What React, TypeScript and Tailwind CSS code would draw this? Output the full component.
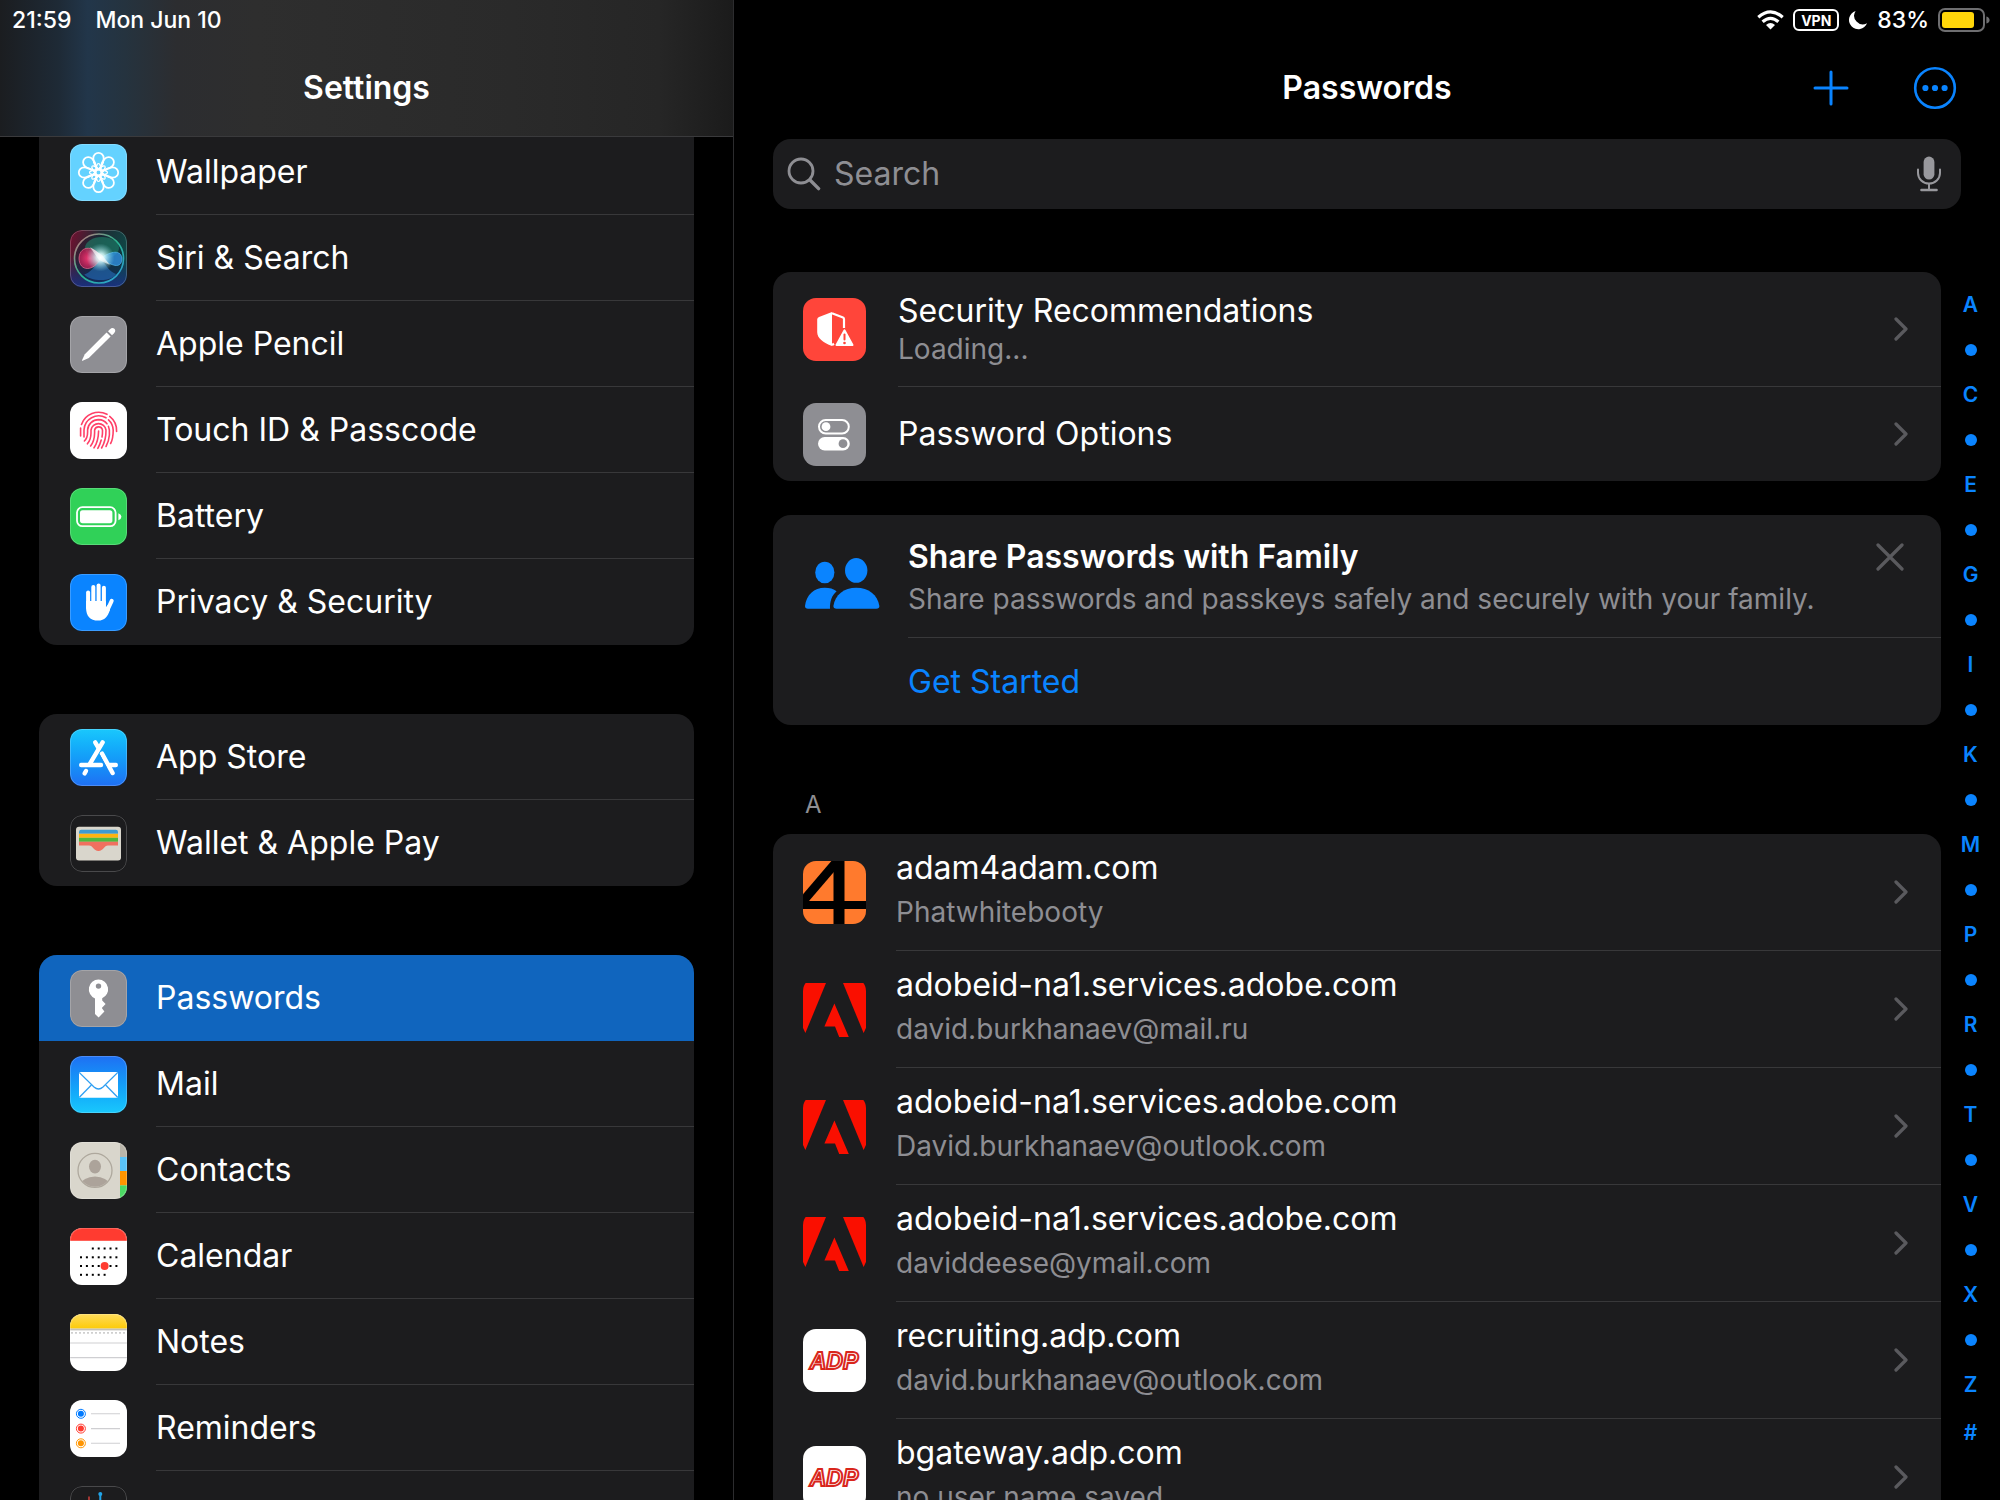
import type { ReactNode } from 'react'

// ── App icons (57 × 57) ──────────────────────────────────

function WallpaperIcon() {
  return (
    <svg viewBox="0 0 57 57" className="size-full bg-[#64d2ff]">
      <g fill="none" stroke="#fff" strokeWidth="1.8" strokeLinejoin="round">
        {[0, 45, 90, 135, 180, 225, 270, 315].map((a) => (
          <path
            key={a}
            transform={`translate(28.5 28.5) rotate(${a})`}
            d="M0 -3 L-2.6 -6 C-4.6 -9 -5.2 -11 -5.2 -14.3 A5.2 5.4 0 0 1 5.2 -14.3 C5.2 -11 4.6 -9 2.6 -6 Z"
          />
        ))}
        {[0, 45, 90, 135].map((a) => (
          <ellipse key={a} cx="28.5" cy="28.5" rx="2.6" ry="9" transform={`rotate(${a} 28.5 28.5)`} strokeWidth="1.2" />
        ))}
      </g>
    </svg>
  )
}

function SiriIcon() {
  return (
    <svg viewBox="0 0 57 57" className="size-full">
      <defs>
        <linearGradient id="siri-bg" x1="0" y1="0.2" x2="1" y2="0.5">
          <stop offset="0" stopColor="#6d1230" />
          <stop offset="0.45" stopColor="#1f2a33" />
          <stop offset="1" stopColor="#0d4a48" />
        </linearGradient>
        <linearGradient id="siri-low" x1="0" y1="0" x2="0" y2="1">
          <stop offset="0.45" stopColor="#14306b" stopOpacity="0" />
          <stop offset="1" stopColor="#1b2f86" stopOpacity="0.9" />
        </linearGradient>
        <linearGradient id="siri-ring" x1="0" y1="0" x2="1" y2="1">
          <stop offset="0" stopColor="#d0707c" />
          <stop offset="0.5" stopColor="#2bb58e" />
          <stop offset="1" stopColor="#2d9be0" />
        </linearGradient>
        <radialGradient id="siri-pink">
          <stop offset="0" stopColor="#ff3d78" />
          <stop offset="1" stopColor="#c81e58" stopOpacity="0.7" />
        </radialGradient>
        <radialGradient id="siri-glow">
          <stop offset="0" stopColor="#fff" />
          <stop offset="0.3" stopColor="#dff" stopOpacity="0.85" />
          <stop offset="1" stopColor="#7fd8e0" stopOpacity="0" />
        </radialGradient>
      </defs>
      <rect width="57" height="57" fill="url(#siri-bg)" />
      <rect width="57" height="57" fill="url(#siri-low)" />
      <circle cx="29" cy="28.5" r="24.5" fill="#0c1f33" fillOpacity="0.35" stroke="url(#siri-ring)" strokeWidth="1.6" />
      <ellipse cx="32" cy="18" rx="17" ry="11" fill="#23a27c" fillOpacity="0.45" />
      <path d="M31 28 C26 16 10 14 9 28 C9 42 24 42 31 28Z" fill="url(#siri-pink)" stroke="#ff7da0" strokeWidth="0.6" />
      <path d="M31 28 C38 23 50 18 52 28 C52 38 44 38 31 28Z" fill="#2f8fe0" fillOpacity="0.8" stroke="#5cc6ff" strokeWidth="0.6" />
      <path d="M31 28 C27 36 16 46 14 44 C20 52 42 52 46 44 C40 42 36 36 31 28Z" fill="#2774c4" fillOpacity="0.55" />
      <circle cx="30.5" cy="27.5" r="14" fill="url(#siri-glow)" />
      <path d="M20 17 L32 25 L40 35 L29 30Z" fill="#fff" fillOpacity="0.6" />
    </svg>
  )
}

function PencilIcon() {
  return (
    <svg viewBox="0 0 57 57" className="size-full bg-[#8e8e93]">
      <path d="M36.6 16.6 L40.6 20.6 L18.8 42 L12.6 44.8 Q11.8 45 12 44.2 L14.8 38.2 Z" fill="#fff" />
      <path d="M38 15.3 L40 13.2 Q42.4 10.8 44.4 12.8 Q46.3 14.8 44 17.2 L42 19.2 Z" fill="#fff" />
    </svg>
  )
}

function TouchIdIcon() {
  return (
    <svg viewBox="0 0 57 57" className="size-full bg-white">
      <g fill="none" stroke="#ff4068" strokeWidth="1.6" strokeLinecap="round">
        <path d="M11.5 22.5 A18.2 18.2 0 0 1 37 12.3" />
        <path d="M39.7 14.4 A18.2 18.2 0 0 1 46.6 29.5" />
        <path d="M10.6 26 V34" />
        <path d="M14 35 V28 A14.7 14.7 0 0 1 36 15.8" />
        <path d="M38.5 17.8 A14.7 14.7 0 0 1 43.2 28 Q43.2 37 40.6 41.5" />
        <path d="M14.4 39 Q17.6 36 17.6 30 V28 A11 11 0 0 1 28.5 17.6 Q34 17.8 37 21.8" />
        <path d="M38.4 24.3 Q40 28 39.4 33 Q38.8 39.5 36 44.5" />
        <path d="M17.4 41.8 Q21 37.5 21 31 V28 A7.6 7.6 0 0 1 36 28 Q36.2 38 31.6 46" />
        <path d="M20.6 44 Q24.5 39 24.6 31 V28.2 A4 4 0 0 1 32.5 28.4 Q32.6 32 32 35" />
        <path d="M24 45.8 Q28.4 39.5 28.6 29" />
        <path d="M31.2 38 Q30 42.5 27.8 46.4" />
      </g>
    </svg>
  )
}

function BatteryIcon() {
  return (
    <svg viewBox="0 0 57 57" className="size-full bg-[#30d158]">
      <rect x="7" y="19.2" width="38.6" height="19" rx="5.4" fill="none" stroke="#fff" strokeWidth="1.8" />
      <rect x="10" y="22.2" width="32.4" height="13" rx="2.6" fill="#fff" />
      <path d="M48.4 25.2 Q51.4 26.4 51.4 28.7 Q51.4 31 48.4 32.2 Z" fill="#fff" />
    </svg>
  )
}

function HandIcon() {
  return (
    <svg viewBox="0 0 57 57" className="size-full bg-[#0a84ff]">
      <g fill="none" stroke="#fff" strokeWidth="4" strokeLinecap="round">
        <path d="M18.1 18.4 V34" />
        <path d="M23.3 13 V30" />
        <path d="M28.6 11.6 V30" />
        <path d="M33.9 13.8 V32" />
        <path d="M41.7 26.8 L37 37" />
      </g>
      <path d="M16.1 27 H35.9 V33.2 L38.5 30 L40 36 C37.6 42.5 34.8 46.6 28.2 46.6 C20 46.6 16.1 42 16.1 34 Z" fill="#fff" />
    </svg>
  )
}

function AppStoreIcon() {
  return (
    <svg viewBox="0 0 57 57" className="size-full bg-linear-to-b from-[#1ac8fc] to-[#1f6ff3]">
      <g fill="none" stroke="#fff" strokeWidth="4.4" strokeLinecap="round">
        <path d="M25.2 13.4 L28.6 19" />
        <path d="M32.6 13.4 L20 34.6" />
        <path d="M11.2 36 H31" />
        <path d="M40 36 H45.8" />
        <path d="M32 24.6 L42.6 44" />
        <path d="M16 42 L14.6 44.4" />
      </g>
      <path d="M29.6 26 L36 38" fill="none" stroke="#1f90f6" strokeWidth="1" />
    </svg>
  )
}

function WalletIcon() {
  return (
    <svg viewBox="0 0 57 57" className="size-full bg-[#1c1c1e]">
      <rect x="6" y="11.8" width="45" height="33.6" rx="3" fill="#d9d6cc" />
      <path d="M9 18.8 V17 Q9 14.8 11.2 14.8 H45.8 Q48 14.8 48 17 V18.8 Z" fill="#3d9bd1" />
      <rect x="9" y="18.8" width="39" height="4" fill="#ffb30f" />
      <rect x="9" y="22.8" width="39" height="4" fill="#4fb83d" />
      <path d="M9 26.8 H48 V30.6 H38 C34 30.6 33.5 36 28.5 36 C23.5 36 23 30.6 19 30.6 H9 Z" fill="#f0705f" />
    </svg>
  )
}

function KeyIcon() {
  return (
    <svg viewBox="0 0 57 57" className="size-full bg-[#8e8e93]">
      <path
        fillRule="evenodd"
        fill="#fff"
        d="M28.5 9.5 A9.8 9.8 0 0 1 32.2 28.3 V30.6 L35.6 34 L31.8 38 L34.4 41.4 L28.6 47.4 L25 44 V28.4 A9.8 9.8 0 0 1 28.5 9.5 Z M28.5 13.4 A2.7 2.7 0 1 0 28.5 18.8 A2.7 2.7 0 1 0 28.5 13.4 Z"
      />
    </svg>
  )
}

function MailIcon() {
  return (
    <svg viewBox="0 0 57 57" className="size-full bg-linear-to-b from-[#1f6ff3] to-[#1ac8fc]">
      <rect x="9" y="16" width="39" height="25.8" rx="1.6" fill="#fff" />
      <g fill="none" stroke="#2f9ff2" strokeWidth="1.3">
        <path d="M9.4 16.6 L24 31 Q28.5 35 33 31 L47.6 16.6" />
        <path d="M9.4 41.2 L21.4 29" />
        <path d="M47.6 41.2 L35.6 29" />
      </g>
    </svg>
  )
}

function ContactsIcon() {
  return (
    <svg viewBox="0 0 57 57" className="size-full bg-[#d9d6cc]">
      <defs>
        <clipPath id="contact-face">
          <circle cx="25" cy="28.4" r="16.4" />
        </clipPath>
      </defs>
      <rect x="50" width="7" height="15" fill="#b9b5aa" />
      <rect x="50" y="15" width="7" height="14" fill="#5ac4fa" />
      <rect x="50" y="29" width="7" height="14.4" fill="#ff9500" />
      <rect x="50" y="43.4" width="7" height="14" fill="#4cd964" />
      <circle cx="25" cy="28.4" r="17" fill="none" stroke="#aea89d" strokeWidth="1.3" />
      <g fill="#aca39a" clipPath="url(#contact-face)">
        <ellipse cx="25" cy="24.6" rx="6" ry="6.8" />
        <ellipse cx="25" cy="43" rx="14" ry="8.6" />
      </g>
    </svg>
  )
}

function CalendarIcon() {
  const rows = [
    { y: 20.5, from: 2, to: 6 },
    { y: 29.3, from: 0, to: 6 },
    { y: 38, from: 0, to: 6 },
    { y: 46.8, from: 0, to: 4 },
  ]
  return (
    <svg viewBox="0 0 57 57" className="size-full bg-white">
      <rect width="57" height="12.8" fill="#ff3b30" />
      {rows.map((row) =>
        [0, 1, 2, 3, 4, 5, 6]
          .filter((i) => i >= row.from && i <= row.to)
          .map((i) => <rect key={`${row.y}-${i}`} x={10 + i * 5.9} y={row.y - 1} width="2" height="2" />),
      )}
      <circle cx="34.6" cy="38" r="4" fill="#ff3b30" />
    </svg>
  )
}

function NotesIcon() {
  return (
    <svg viewBox="0 0 57 57" className="size-full bg-white">
      <defs>
        <linearGradient id="notes-top" x1="0" y1="0" x2="0" y2="1">
          <stop offset="0" stopColor="#fedb5c" />
          <stop offset="1" stopColor="#fdcb08" />
        </linearGradient>
      </defs>
      <rect width="57" height="14.6" fill="url(#notes-top)" />
      <rect y="14.6" width="57" height="1.8" fill="#c3c0b8" />
      <path d="M1 18.8 H57" stroke="#cfcfcf" strokeWidth="1.8" strokeDasharray="2 2" />
      <path d="M0 29 H57 M0 43.6 H57" stroke="#cfcfd2" strokeWidth="1.2" />
    </svg>
  )
}

function RemindersIcon() {
  const items = [
    { y: 13.8, color: '#007aff' },
    { y: 28.6, color: '#ff3b30' },
    { y: 43.3, color: '#ff9500' },
  ]
  return (
    <svg viewBox="0 0 57 57" className="size-full bg-white">
      {items.map((item) => (
        <g key={item.y}>
          <circle cx="10.9" cy={item.y} r="4.5" fill="none" stroke={item.color} strokeWidth="1" />
          <circle cx="10.9" cy={item.y} r="3" fill={item.color} />
          <path d={`M21 ${item.y} H50`} stroke="#cfcfd2" strokeWidth="1.1" />
        </g>
      ))}
    </svg>
  )
}

function VoiceMemosIcon() {
  return (
    <svg viewBox="0 0 57 57" className="size-full bg-[#1c1c1e]">
      <path d="M19 10.5 V46 M22.6 14 V42" stroke="#d8413c" strokeWidth="1.4" />
      <path d="M30.3 8 V50" stroke="#21a4e8" strokeWidth="2" />
      <circle cx="30.3" cy="8" r="2" fill="#21a4e8" />
    </svg>
  )
}

// ── Site icons (63 × 63) ─────────────────────────────────

function SecurityIcon() {
  return (
    <svg viewBox="0 0 63 63" className="size-full bg-[#ff453a]">
      <path d="M29 14 L16 19 Q14.2 19.8 14.2 21.6 V34 C14.2 40.5 20 44.4 29 48 Z" fill="#fff" />
      <path d="M29 15.2 L40 19.6 Q41 20 41 21.2 V30" fill="none" stroke="#fff" strokeWidth="2.2" />
      <path d="M29 47 L31 45.8" stroke="#fff" strokeWidth="2.2" />
      <path d="M41.5 32.4 L49.4 47 H33.6 Z" fill="#fff" stroke="#fff" strokeWidth="2.2" strokeLinejoin="round" />
      <path d="M41.5 36.4 V41.6" stroke="#ff453a" strokeWidth="2" strokeLinecap="round" />
      <circle cx="41.5" cy="45" r="1.3" fill="#ff453a" />
    </svg>
  )
}

function OptionsIcon() {
  return (
    <svg viewBox="0 0 63 63" className="size-full bg-[#8e8e93]">
      <rect x="16" y="17" width="29.8" height="13.4" rx="6.7" fill="none" stroke="#fff" strokeWidth="2" />
      <circle cx="23" cy="23.7" r="4.4" fill="#fff" />
      <rect x="15" y="34" width="31.8" height="13.4" rx="6.7" fill="#fff" />
      <circle cx="40" cy="40.7" r="4.4" fill="#8e8e93" />
    </svg>
  )
}

function Adam4Icon() {
  return (
    <svg viewBox="0 0 63 63" className="size-full bg-[#ff7a2d]">
      <g stroke="#000" fill="none">
        <path d="M36 0 V63" strokeWidth="11" />
        <path d="M0 44 H63" strokeWidth="8" />
        <path d="M36 -2 L-5 46" strokeWidth="9" />
      </g>
    </svg>
  )
}

function AdobeIcon() {
  return (
    <svg viewBox="0 0 63 63" className="size-full" fill="#fa0f00">
      <path d="M0 5 H23 L2.4 55 L0 50 Z" />
      <path d="M63 5 H40 L60.6 55 L63 50 Z" />
      <path d="M31.4 25.4 L45.8 59 H36.2 L32 48.4 H21.4 Z" />
    </svg>
  )
}

function AdpIcon() {
  return (
    <svg viewBox="0 0 63 63" className="size-full bg-white">
      <text
        x="31"
        y="40"
        textAnchor="middle"
        fontFamily="'Liberation Sans', sans-serif"
        fontSize="23"
        fontWeight="700"
        fontStyle="italic"
        fill="#fff"
        stroke="#d9261c"
        strokeWidth="2"
      >
        ADP
      </text>
    </svg>
  )
}

// ── Small glyphs ─────────────────────────────────────────

function Chevron() {
  return (
    <svg viewBox="0 0 14 24" className="w-3.5 h-6 shrink-0" fill="none" aria-hidden="true">
      <path d="M2 2 L12 12 L2 22" stroke="#5a5a5e" strokeWidth="3.2" strokeLinecap="round" strokeLinejoin="round" />
    </svg>
  )
}

function FamilyIcon() {
  return (
    <svg viewBox="0 0 75 51" className="w-[75px] h-[51px]" fill="#0a84ff" aria-hidden="true">
      <ellipse cx="19.8" cy="14.5" rx="9.6" ry="10.8" />
      <ellipse cx="51.2" cy="12.4" rx="11.2" ry="12.4" />
      <path d="M3 50.8 Q0 50.8 0 48 C1.4 37 9 29.8 19.8 29.8 Q27 29.8 31.6 33.2 C26.8 37.4 24.8 43 25 50.8 Z" />
      <path d="M31.6 50.8 Q28.4 50.8 28.4 48 C30 37 39 29.8 51.2 29.8 C63.6 29.8 72.6 37 74.4 48 Q74.4 50.8 71.4 50.8 Z" />
    </svg>
  )
}

// ── Data ─────────────────────────────────────────────────

type SettingsItem = { label: string; icon: ReactNode; active?: boolean }

const settingsGroups: SettingsItem[][] = [
  [
    { label: 'Wallpaper', icon: <WallpaperIcon /> },
    { label: 'Siri & Search', icon: <SiriIcon /> },
    { label: 'Apple Pencil', icon: <PencilIcon /> },
    { label: 'Touch ID & Passcode', icon: <TouchIdIcon /> },
    { label: 'Battery', icon: <BatteryIcon /> },
    { label: 'Privacy & Security', icon: <HandIcon /> },
  ],
  [
    { label: 'App Store', icon: <AppStoreIcon /> },
    { label: 'Wallet & Apple Pay', icon: <WalletIcon /> },
  ],
  [
    { label: 'Passwords', icon: <KeyIcon />, active: true },
    { label: 'Mail', icon: <MailIcon /> },
    { label: 'Contacts', icon: <ContactsIcon /> },
    { label: 'Calendar', icon: <CalendarIcon /> },
    { label: 'Notes', icon: <NotesIcon /> },
    { label: 'Reminders', icon: <RemindersIcon /> },
    { label: 'Voice Memos', icon: <VoiceMemosIcon /> },
  ],
]

const accounts = [
  { site: 'adam4adam.com', user: 'Phatwhitebooty', icon: <Adam4Icon /> },
  { site: 'adobeid-na1.services.adobe.com', user: 'david.burkhanaev@mail.ru', icon: <AdobeIcon /> },
  { site: 'adobeid-na1.services.adobe.com', user: 'David.burkhanaev@outlook.com', icon: <AdobeIcon /> },
  { site: 'adobeid-na1.services.adobe.com', user: 'daviddeese@ymail.com', icon: <AdobeIcon /> },
  { site: 'recruiting.adp.com', user: 'david.burkhanaev@outlook.com', icon: <AdpIcon /> },
  { site: 'bgateway.adp.com', user: 'no user name saved', icon: <AdpIcon /> },
]

const indexLetters = ['A', 'C', 'E', 'G', 'I', 'K', 'M', 'P', 'R', 'T', 'V', 'X', 'Z']

// ── Sidebar ──────────────────────────────────────────────

function SettingsRow({ item, last }: { item: SettingsItem; last: boolean }) {
  return (
    <li>
      <a href="#" className={`flex h-[86px] pl-[31px] ${item.active ? 'bg-[#1065be]' : ''}`}>
        <span className="flex items-center mr-[29px]">
          <span className="relative block size-[57px] overflow-hidden rounded-[12px] after:absolute after:inset-0 after:rounded-[12px] after:border after:border-white/20">
            {item.icon}
          </span>
        </span>
        <span
          className={`flex flex-1 items-center text-[32px] leading-10 ${last || item.active ? '' : 'border-b border-[#38383a]'}`}
        >
          {item.label}
        </span>
      </a>
    </li>
  )
}

function Sidebar() {
  return (
    <aside className="flex flex-col min-h-0 border-r border-[#2c2c2e]">
      <header className="relative z-10 shrink-0 border-b border-[#3a3a3c] bg-[linear-gradient(to_right,#1b1d20_0%,#1e2a36_8%,#22364a_12%,#25333f_17%,#2c2d30_24%,#2e2e2e_35%,#2a2a2a_70%,#262626_90%,#1b1b1b_100%)]">
        <div className="flex h-10 items-center gap-6 pl-3 text-[23px] font-medium">
          <span>21:59</span>
          <span>Mon Jun 10</span>
        </div>
        <h1 className="flex h-24 items-center justify-center text-[32px] font-semibold">Settings</h1>
      </header>
      {/* the list is scrolled a little way under the header */}
      <nav className="flex-1 min-h-0 overflow-hidden -mt-2 px-[39px]" aria-label="Settings">
        {settingsGroups.map((group, i) => (
          <ul
            key={i}
            className={`bg-[#1c1c1e] overflow-hidden mb-[69px] rounded-[18px] ${i === 0 ? 'rounded-t-none' : ''}`}
          >
            {group.map((item, j) => (
              <SettingsRow key={item.label} item={item} last={j === group.length - 1} />
            ))}
          </ul>
        ))}
      </nav>
    </aside>
  )
}

// ── Passwords pane ───────────────────────────────────────

function StatusIcons() {
  return (
    <div className="flex h-10 shrink-0 items-center justify-end gap-[9px] pr-[10px]">
      <svg viewBox="0 0 27 20" className="w-[27px] h-5" aria-hidden="true">
        <g fill="none" stroke="#fff" strokeWidth="3.2">
          <path d="M1.3 7.2 Q13.5 -3.6 25.7 7.2" />
          <path d="M5.6 11.8 Q13.5 4.8 21.4 11.8" />
        </g>
        <path d="M9 15 Q13.5 11.2 18 15 L13.5 19.6 Z" fill="#fff" />
      </svg>
      <span className="flex h-[22px] w-[46px] items-center justify-center rounded-[6px] border-2 border-white text-[14px] font-bold">
        VPN
      </span>
      <svg viewBox="0 0 20 20" className="size-5" fill="#fff" aria-hidden="true">
        <path d="M7.6 1 A9.3 9.3 0 1 0 19 13.2 A8.6 8.6 0 0 1 7.6 1 Z" />
      </svg>
      <span className="text-[23px] font-medium">83%</span>
      <svg viewBox="0 0 52 24" className="w-[52px] h-6" aria-hidden="true">
        <rect x="1" y="1" width="45" height="22" rx="6" fill="none" stroke="#6e6e70" strokeWidth="2" />
        <rect x="4" y="4" width="32" height="16" rx="3" fill="#ffd60a" />
        <path d="M48.4 8.4 Q51.6 9.4 51.6 12 Q51.6 14.6 48.4 15.6 Z" fill="#6e6e70" />
      </svg>
    </div>
  )
}

function PaneHeader() {
  return (
    <header className="grid h-24 shrink-0 grid-cols-[1fr_auto_1fr] items-center">
      <h2 className="col-start-2 text-[32px] font-semibold">Passwords</h2>
      <div className="flex items-center justify-end gap-16 pr-[43px] text-[#0a84ff]">
        <button type="button" aria-label="Add password">
          <svg viewBox="0 0 36 36" className="size-9" fill="none" stroke="currentColor" strokeWidth="3" strokeLinecap="round">
            <path d="M18 2 V34 M2 18 H34" />
          </svg>
        </button>
        <button type="button" aria-label="More">
          <svg viewBox="0 0 44 44" className="size-11" fill="none" stroke="currentColor" strokeWidth="2.6">
            <circle cx="22" cy="22" r="19.8" />
            <g fill="currentColor" stroke="none">
              <circle cx="12.4" cy="22" r="3.1" />
              <circle cx="22" cy="22" r="3.1" />
              <circle cx="31.6" cy="22" r="3.1" />
            </g>
          </svg>
        </button>
      </div>
    </header>
  )
}

function SearchField() {
  return (
    <label className="flex h-[70px] shrink-0 items-center rounded-[18px] bg-[#1c1c1e] mt-[3px] mx-[39px] pl-[14px] pr-[19px] text-[#8e8e93]">
      <svg viewBox="0 0 34 34" className="size-[34px]" fill="none" stroke="#8e8e93" strokeWidth="2.8" strokeLinecap="round">
        <circle cx="14" cy="14" r="12" />
        <path d="M23 23 L31.6 31.6" strokeWidth="3.4" />
      </svg>
      <input
        type="text"
        placeholder="Search"
        aria-label="Search"
        className="flex-1 ml-[13px] bg-transparent text-[32px] leading-10 outline-none placeholder:text-[#8e8e93]"
      />
      <button type="button" aria-label="Dictate">
        <svg viewBox="0 0 26 36" className="w-[26px] h-9" fill="none" stroke="#98989d" strokeWidth="2">
          <rect x="7.6" y="0.6" width="10.8" height="23" rx="5.4" fill="#98989d" stroke="none" />
          <path d="M2 13.4 V17 A11 10.6 0 0 0 24 17 V13.4" strokeLinecap="round" />
          <path d="M13 27.6 V33" />
          <path d="M5.4 34 H20.6" strokeWidth="2.4" strokeLinecap="round" />
        </svg>
      </button>
    </label>
  )
}

function SiteIcon({ children }: { children: ReactNode }) {
  return <span className="block size-[63px] shrink-0 overflow-hidden rounded-[13px]">{children}</span>
}

function OverviewCard() {
  return (
    <section className="overflow-hidden rounded-[18px] bg-[#1c1c1e]">
      <a href="#" className="flex h-[115px] items-center pl-[30px]">
        <SiteIcon>
          <SecurityIcon />
        </SiteIcon>
        <span className="flex flex-1 self-stretch items-center justify-between border-b border-[#38383a] ml-8 pr-[33px]">
          <span>
            <span className="block text-[32px] leading-10">Security Recommendations</span>
            <span className="block text-[28px] leading-9 text-[#8e8e93]">Loading...</span>
          </span>
          <Chevron />
        </span>
      </a>
      <a href="#" className="flex h-[94px] items-center pl-[30px]">
        <SiteIcon>
          <OptionsIcon />
        </SiteIcon>
        <span className="flex flex-1 items-center justify-between ml-8 pr-[33px]">
          <span className="text-[32px] leading-10">Password Options</span>
          <Chevron />
        </span>
      </a>
    </section>
  )
}

function FamilyCard() {
  return (
    <section className="flex rounded-[18px] bg-[#1c1c1e] mt-[34px] pl-8">
      <div className="pt-[43px] mr-7">
        <FamilyIcon />
      </div>
      <div className="flex-1">
        <div className="flex h-[123px] items-start justify-between border-b border-[#38383a] pt-[22px]">
          <div>
            <h3 className="text-[32px] leading-10 font-semibold">Share Passwords with Family</h3>
            <p className="mt-1 text-[28px] leading-9 text-[#8e8e93]">
              Share passwords and passkeys safely and securely with your family.
            </p>
          </div>
          <button type="button" aria-label="Dismiss" className="mr-[37px] mt-[6px]">
            <svg viewBox="0 0 28 28" className="size-7" stroke="#5a5a5e" strokeWidth="3.2" strokeLinecap="round">
              <path d="M2 2 L26 26 M26 2 L2 26" />
            </svg>
          </button>
        </div>
        <div className="flex h-[87px] items-center">
          <button type="button" className="text-[32px] leading-10 text-[#0a84ff]">
            Get Started
          </button>
        </div>
      </div>
    </section>
  )
}

function AccountList() {
  return (
    <section>
      <h3 className="mt-[65px] mb-[14px] pl-8 text-[24px] leading-[30px] text-[#8e8e93]">A</h3>
      <ul className="rounded-[18px] bg-[#1c1c1e]">
        {accounts.map((account) => (
          <li key={account.site + account.user}>
            <a href="#" className="flex h-[117px] items-center pl-[30px]">
              <SiteIcon>{account.icon}</SiteIcon>
              <span className="flex flex-1 self-stretch items-center justify-between border-b border-[#38383a] ml-[30px] pr-[33px]">
                <span className="pb-1">
                  <span className="block text-[32px] leading-10">{account.site}</span>
                  <span className="block mt-1 text-[28px] leading-10 text-[#8e8e93]">{account.user}</span>
                </span>
                <Chevron />
              </span>
            </a>
          </li>
        ))}
      </ul>
    </section>
  )
}

function AlphabetIndex() {
  return (
    <nav className="w-[59px] shrink-0 pt-[10px] text-[21px] font-semibold text-[#0a84ff]" aria-label="Index">
      {indexLetters.map((letter, i) => (
        <div key={letter}>
          <a href="#" className="flex h-[45px] items-center justify-center">
            {letter}
          </a>
          {i < indexLetters.length - 1 && (
            <div className="flex h-[45px] items-center justify-center">
              <span className="size-3 rounded-full bg-[#0a84ff]" />
            </div>
          )}
        </div>
      ))}
      <a href="#" className="flex h-[51px] items-center justify-center">
        #
      </a>
    </nav>
  )
}

export default function App() {
  return (
    <div className="grid h-screen grid-cols-[36.7%_1fr] grid-rows-1 overflow-hidden bg-black font-['Inter','Liberation_Sans',sans-serif] text-white">
      <Sidebar />
      <main className="flex flex-col min-h-0 overflow-hidden">
        <StatusIcons />
        <PaneHeader />
        <SearchField />
        <div className="flex shrink-0 mt-[63px]">
          <div className="flex-1 min-w-0 pl-[39px]">
            <OverviewCard />
            <FamilyCard />
            <AccountList />
          </div>
          <AlphabetIndex />
        </div>
      </main>
    </div>
  )
}
